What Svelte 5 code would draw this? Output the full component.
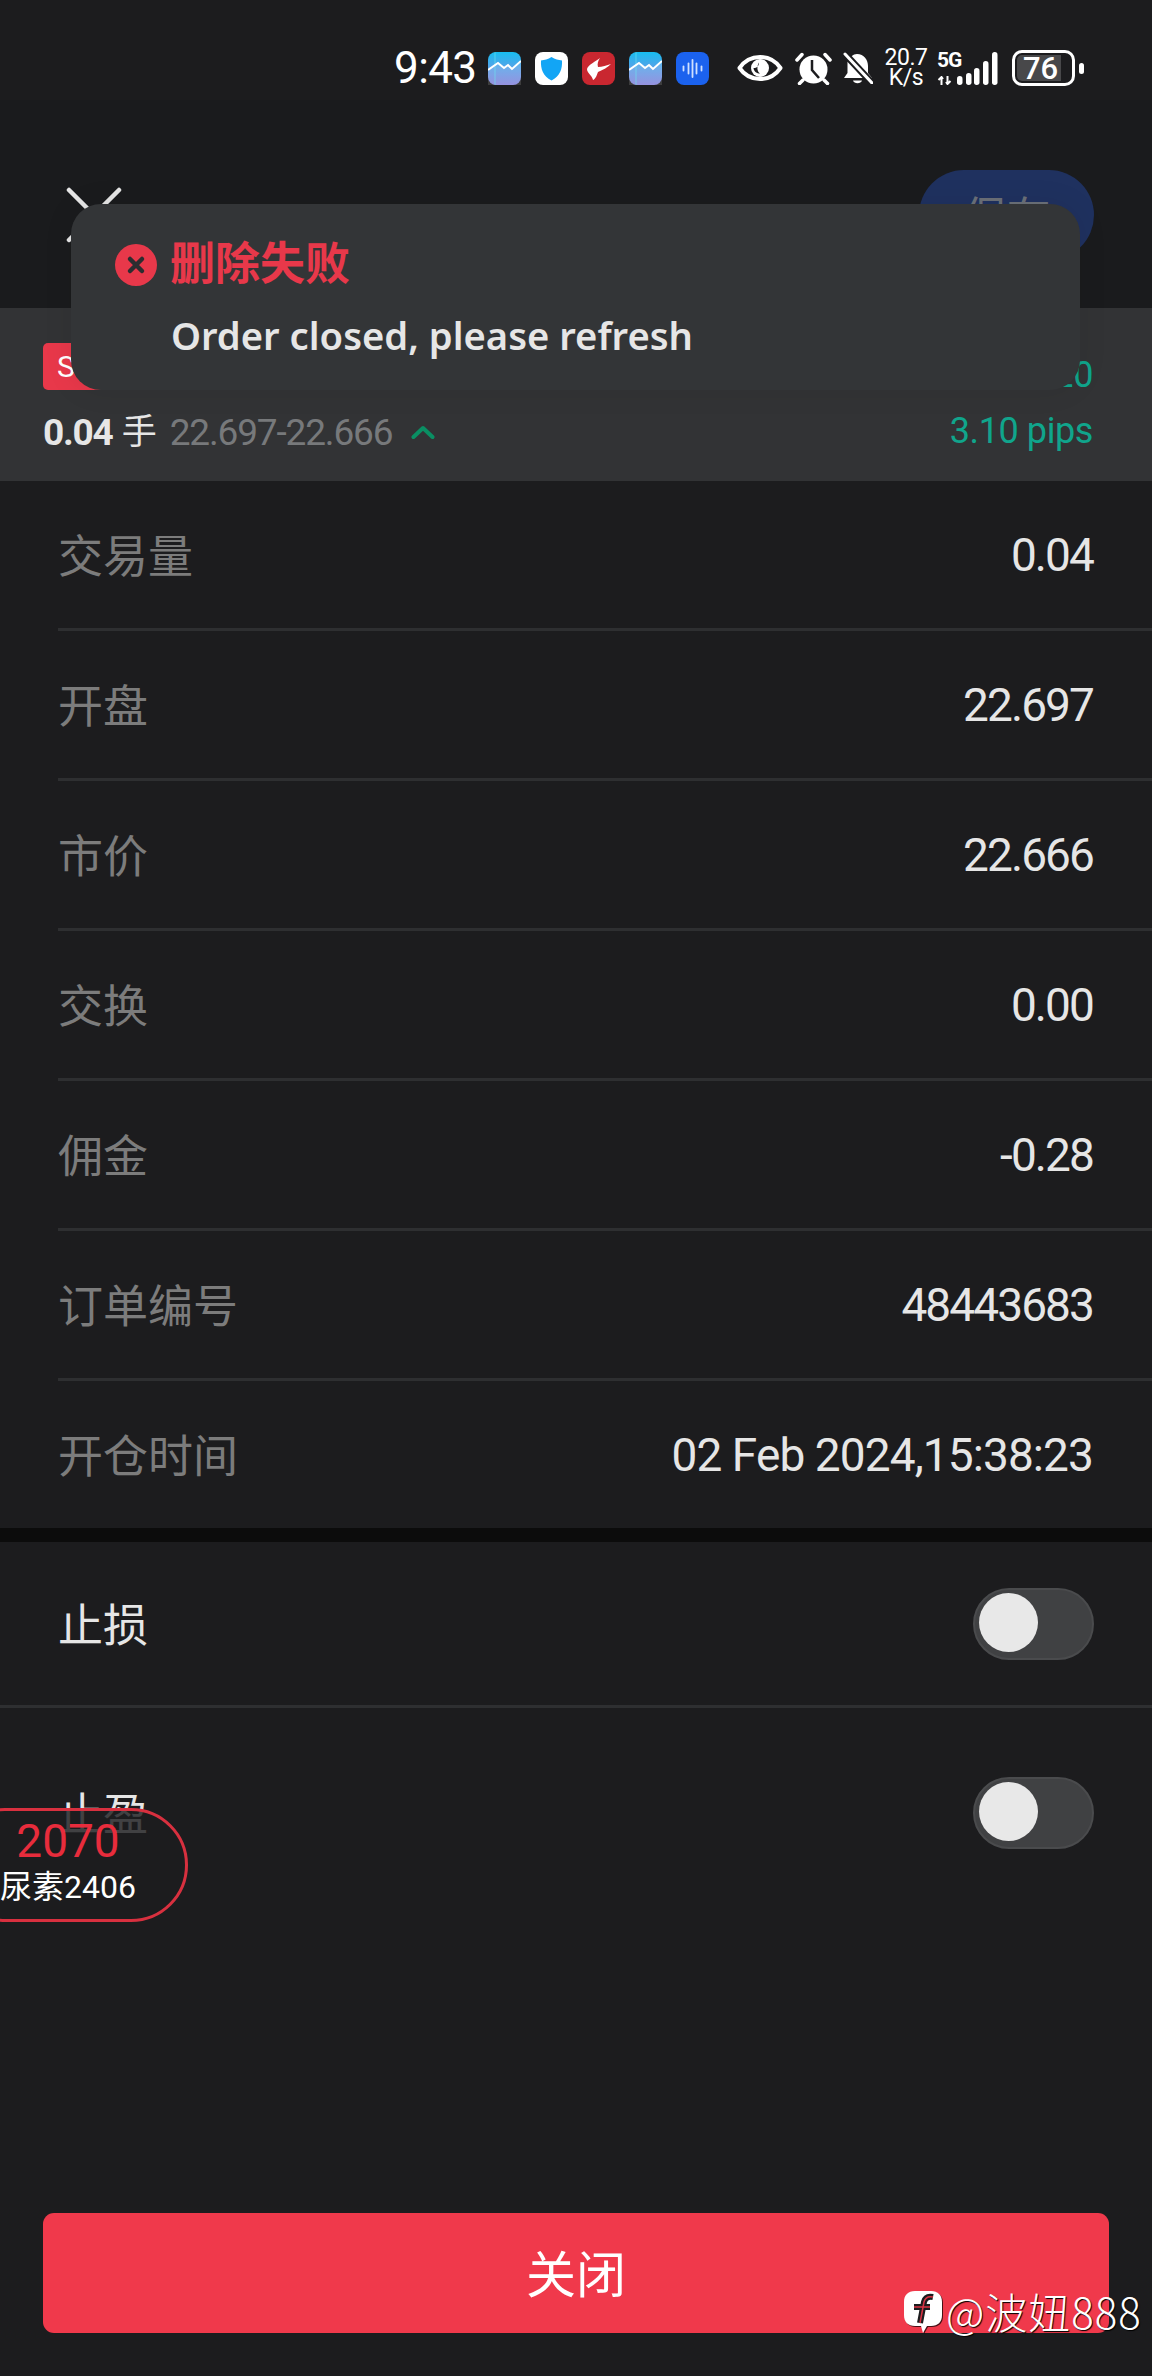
<script lang="ts">
	const details = [
		{ label: '交易量', value: '0.04' },
		{ label: '开盘', value: '22.697' },
		{ label: '市价', value: '22.666' },
		{ label: '交换', value: '0.00' },
		{ label: '佣金', value: '-0.28' },
		{ label: '订单编号', value: '48443683' },
		{ label: '开仓时间', value: '02 Feb 2024,15:38:23', date: true }
	];

	const signalBars = [
		{ x: 0, h: 9 },
		{ x: 9, h: 12 },
		{ x: 17, h: 17 },
		{ x: 26, h: 24 },
		{ x: 35, h: 33 }
	];
</script>

{#snippet stockIcon()}
	<svg class="app-icon" viewBox="0 0 33 33">
		<defs>
			<linearGradient id="stock" x1="0" y1="0" x2="0" y2="1">
				<stop offset="0" stop-color="#17bdf0" />
				<stop offset="0.55" stop-color="#5f9de6" />
				<stop offset="1" stop-color="#8480da" />
			</linearGradient>
		</defs>
		<rect width="33" height="33" rx="8" fill="url(#stock)" />
		<path d="M0 18 L10 11 L16 16 L20 13 L24 17 L33 9 V33 H0 Z" fill="#fff" opacity="0.14" />
		<path d="M7 0 V33" stroke="#6fe8f0" stroke-width="1" opacity="0.6" />
		<path d="M0 18 L10 11 L16 16 L20 13 L24 17 L33 9" fill="none" stroke="#fff" stroke-width="2" />
	</svg>
{/snippet}

{#snippet toggle()}
	<div class="toggle"><span class="knob"></span></div>
{/snippet}

<div class="page">
	<div class="status-bar">
		<span class="time">9:43</span>
		<div class="app-icons">
			{@render stockIcon()}
			<svg class="app-icon" viewBox="0 0 33 33">
				<rect width="33" height="33" rx="8" fill="#fff" />
				<path d="M16.5 5 C20 7.5 23.500 8 27 8.500 C27.500 17 25 24 16.500 28.500 C8 24 5.500 17 6 8.500 C9.500 8 13 7.500 16.500 5 Z" fill="#12a5f5" />
			</svg>
			<svg class="app-icon" viewBox="0 0 33 33">
				<rect width="33" height="33" rx="8" fill="#c92730" />
				<path d="M18 6 C14 9 6 13 5 17 C5 21 10 23 11 28 C14 27 15 22 16 20 C21 18 26 15 29 12 C25 13 20 15 16 15 C15 12 16 9 18 6 Z" fill="#fff" />
			</svg>
			{@render stockIcon()}
			<svg class="app-icon" viewBox="0 0 33 33">
				<rect width="33" height="33" rx="8" fill="#1b62ee" />
				<g stroke="#cfe0ff" stroke-width="1.800" stroke-linecap="round">
					<path d="M7.500 14.500 V18.500" />
					<path d="M12.500 11.500 V21.500" />
					<path d="M16.500 8 V25" />
					<path d="M20.500 11.500 V21.500" />
					<path d="M25.500 14.500 V18.500" />
				</g>
			</svg>
		</div>
		<div class="sys-icons">
			<svg class="eye" viewBox="0 0 46 26">
				<path d="M2.500 13 C8 5 15 2 23 2 C31 2 38 5 43.500 13 C38 21 31 24 23 24 C15 24 8 21 2.500 13 Z" fill="none" stroke="#fff" stroke-width="4" stroke-linejoin="round" />
				<circle cx="23" cy="13" r="9" fill="#fff" />
				<path d="M22 7.500 C22 11 20 13 16.500 13 C17 17 20 18.500 23 18.500 C19.500 16 20 10.500 22 7.500 Z" fill="#1c1c1e" />
			</svg>
			<svg class="alarm" viewBox="0 0 37 33">
				<circle cx="18.500" cy="17.500" r="14" fill="#fff" />
				<path d="M17 8 V18 L24 26" fill="none" stroke="#1c1c1e" stroke-width="2.500" />
				<path d="M2 8 L7 2.500 M35 8 L30 2.500 M8 28 L4.500 31.500 M29 28 L32.500 31.500" stroke="#fff" stroke-width="3.500" stroke-linecap="round" />
			</svg>
			<svg class="bell" viewBox="0 0 30 32">
				<path d="M14 2 C21 2 25 8 25 14 V21 L29 26 H1 L4.500 21 V10 C7 5 10 2 14 2 Z" fill="#fff" />
				<path d="M10 28.500 H19 C18 32 11 32 10 28.500 Z" fill="#fff" />
				<path d="M2 2 L29 31" stroke="#1c1c1e" stroke-width="7" />
				<path d="M2 2 L29 31" stroke="#fff" stroke-width="3" stroke-linecap="round" />
			</svg>
			<div class="speed"><span>20.7</span><span>K/s</span></div>
			<div class="network">
				<div class="net-type">
					<span>5G</span>
					<svg width="16" height="9" viewBox="0 0 16 9">
						<path d="M4.500 9 V1 M1.500 4 L4.500 1 L6 3 M10.500 0 V8 M13.500 5 L10.500 8 L9 6" fill="none" stroke="#fff" stroke-width="2" />
					</svg>
				</div>
				<svg class="signal" viewBox="0 0 41 33">
					{#each signalBars as bar}
						<rect x={bar.x} y={33 - bar.h} width="5.500" height={bar.h} rx="2.700" fill="#fff" />
					{/each}
				</svg>
			</div>
			<div class="battery">
				<div class="battery-body">
					<span class="battery-fill"></span>
					<span class="battery-level">76</span>
				</div>
				<span class="battery-nub"></span>
			</div>
		</div>
	</div>

	<header class="top-bar">
		<svg class="close" viewBox="0 0 56 56">
			<path d="M3 3 L53 53 M53 3 L3 53" stroke="#e6e6e6" stroke-width="4.500" stroke-linecap="round" />
		</svg>
		<button class="save">保存</button>
	</header>

	<section class="summary">
		<div class="summary-row">
			<span class="side-badge">SELL</span>
			<span class="profit">1.20</span>
		</div>
		<div class="summary-row second">
			<div class="lots">
				<strong>0.04</strong>
				<span class="lots-unit">手</span>
				<span class="range">22.697-22.666</span>
				<svg class="chevron" viewBox="0 0 24 14">
					<path d="M2.500 12 L12 3 L21.500 12" fill="none" stroke="#0a8f63" stroke-width="4" stroke-linecap="round" stroke-linejoin="round" />
				</svg>
			</div>
			<span class="pips">3.10 pips</span>
		</div>
	</section>

	<section class="details">
		{#each details as row}
			<div class="detail-row">
				<span class="label">{row.label}</span>
				<span class="value" class:date={row.date}>{row.value}</span>
			</div>
		{/each}
	</section>

	<div class="section-gap"></div>

	<section class="stops">
		<div class="stop-row first">
			<span>止损</span>
			{@render toggle()}
		</div>
		<div class="stop-row second">
			<span>止盈</span>
			{@render toggle()}
		</div>
	</section>

	<footer class="footer">
		<button class="close-order">关闭</button>
	</footer>

	<div class="toast">
		<div class="toast-title">
			<svg class="toast-icon" viewBox="0 0 42 42">
				<circle cx="21" cy="21" r="21" fill="#e8384a" />
				<path d="M15 15 L27 27 M27 15 L15 27" stroke="#2c2d30" stroke-width="4.500" stroke-linecap="round" />
			</svg>
			<span>删除失败</span>
		</div>
		<p>Order closed, please refresh</p>
	</div>

	<div class="ticker">
		<span class="ticker-price">2070</span>
		<span class="ticker-name">尿素2406</span>
	</div>

	<div class="watermark">
		<svg class="watermark-logo" viewBox="0 0 40 44">
			<path d="M12 1 H28 C35 1 39 5 39 12 V25 C39 32 35 36 28 36 H24 L20 43 L18 36 H12 C5 36 1 32 1 25 V12 C1 5 5 1 12 1 Z" fill="#000" opacity="0.7" transform="translate(1 1)" />
			<path d="M12 1 H28 C35 1 39 5 39 12 V25 C39 32 35 36 28 36 H24 L20 43 L18 36 H12 C5 36 1 32 1 25 V12 C1 5 5 1 12 1 Z" fill="#fff" />
			<path d="M30 7 C25 6 22 8 21 12 L17 33 M11 17 H27" fill="none" stroke="#1c1c1e" stroke-width="6" />
			<path d="M30 7 C25 6 22 8 21 12 L17 33 M11 17 H27" fill="none" stroke="#d83243" stroke-width="1.500" />
		</svg>
		<span>@波妞888</span>
	</div>
</div>

<style>
	:global(body) {
		margin: 0;
		background: #1c1c1e;
	}

	.page {
		position: relative;
		display: flex;
		flex-direction: column;
		width: 1152px;
		height: 2376px;
		overflow: hidden;
		background: #1c1c1e;
		color: #e6e6e6;
		font-family: Roboto, 'Noto Sans CJK SC', sans-serif;
	}

	/* status bar */
	.status-bar {
		display: flex;
		align-items: center;
		box-sizing: border-box;
		height: 100px;
		padding: 36px 0 0 394px;
		color: #fff;
	}

	.time {
		width: 94px;
		font-size: 44px;
		line-height: 1;
		letter-spacing: -0.6px;
	}

	.app-icons {
		display: flex;
		gap: 14px;
	}

	.app-icon {
		width: 33px;
		height: 33px;
	}

	.sys-icons {
		display: flex;
		align-items: center;
		margin-left: 28px;
	}

	.eye {
		width: 46px;
		height: 26px;
	}

	.alarm {
		width: 37px;
		height: 33px;
		margin-left: 12px;
	}

	.bell {
		width: 30px;
		height: 32px;
		margin-left: 11px;
	}

	.speed {
		display: flex;
		flex-direction: column;
		align-items: center;
		width: 42px;
		margin-left: 12px;
		font-size: 23px;
		line-height: 20px;
		letter-spacing: -0.4px;
	}

	.network {
		display: flex;
		align-items: flex-end;
		margin-left: 10px;
	}

	.net-type {
		display: flex;
		flex-direction: column;
		align-items: flex-start;
		gap: 7px;
		width: 20px;
		font-size: 21px;
		font-weight: 700;
		line-height: 17px;
		letter-spacing: -1px;
	}

	.signal {
		width: 41px;
		height: 33px;
	}

	.battery {
		display: flex;
		align-items: center;
		gap: 4px;
		margin-left: 14px;
	}

	.battery-body {
		position: relative;
		display: flex;
		align-items: center;
		justify-content: center;
		box-sizing: border-box;
		width: 63px;
		height: 36px;
		padding-right: 6px;
		border: 3px solid #fff;
		border-radius: 10px;
	}

	.battery-fill {
		position: absolute;
		top: 2px;
		bottom: 2px;
		left: 2px;
		width: 44px;
		border-radius: 5px 0 0 5px;
		background: #48484a;
	}

	.battery-level {
		position: relative;
		font-size: 31px;
		font-weight: 500;
		line-height: 1;
	}

	.battery-nub {
		width: 5px;
		height: 11px;
		border-radius: 3px;
		background: #fff;
	}

	/* header */
	.top-bar {
		display: flex;
		align-items: center;
		justify-content: space-between;
		box-sizing: border-box;
		height: 208px;
		padding: 22px 58px 0 66px;
		background: #1a1b1d;
	}

	.close {
		width: 56px;
		height: 56px;
	}

	.save {
		width: 175px;
		height: 90px;
		padding: 0;
		border: 0;
		border-radius: 45px;
		background: #1f315f;
		color: #6b7078;
		font: inherit;
		font-size: 44px;
	}

	/* summary */
	.summary {
		display: flex;
		flex-direction: column;
		gap: 21px;
		box-sizing: border-box;
		height: 173px;
		padding: 35px 59px 0 43px;
		background: #323335;
	}

	.summary-row {
		display: flex;
		align-items: flex-end;
		justify-content: space-between;
		height: 47px;
	}

	.summary-row.second {
		align-items: center;
		height: 42px;
	}

	.side-badge {
		display: flex;
		align-items: center;
		box-sizing: border-box;
		height: 47px;
		padding: 0 14px;
		border-radius: 5px;
		background: #e8384a;
		color: #fff;
		font-size: 30px;
	}

	.profit,
	.pips {
		color: #10a58c;
		font-size: 36px;
		letter-spacing: -0.4px;
		line-height: 1;
	}

	.profit {
		margin-bottom: -3px;
	}

	.pips {
		margin-bottom: 2px;
	}

	.lots {
		display: flex;
		align-items: center;
		font-size: 37px;
		line-height: 1;
	}

	.lots strong {
		font-weight: 700;
		letter-spacing: -1.2px;
	}

	.lots-unit {
		margin-left: 9px;
		font-size: 35px;
	}

	.range {
		margin-left: 13px;
		color: #77797b;
		letter-spacing: -1.15px;
	}

	.chevron {
		width: 24px;
		height: 14px;
		margin-left: 19px;
	}

	/* detail rows */
	.detail-row {
		display: flex;
		align-items: center;
		justify-content: space-between;
		box-sizing: border-box;
		height: 150px;
		margin-left: 58px;
		padding-right: 59px;
		border-bottom: 3px solid #2e2f31;
	}

	.detail-row:last-child {
		height: 147px;
		border-bottom: 0;
	}

	.label {
		margin-bottom: 3px;
		color: #7c7c7c;
		font-size: 45px;
	}

	.value {
		color: #e6e6e6;
		font-size: 46px;
		letter-spacing: -1.9px;
	}

	.value.date {
		letter-spacing: -0.9px;
	}

	.section-gap {
		height: 14px;
		background: #0c0c0c;
	}

	/* stop loss / take profit */
	.stop-row {
		display: flex;
		align-items: center;
		justify-content: space-between;
		box-sizing: border-box;
		padding: 0 58px;
		font-size: 45px;
	}

	.stop-row span:first-child {
		margin-bottom: 3px;
	}

	.stop-row.first {
		height: 166px;
		border-bottom: 3px solid #2e2f31;
	}

	.stop-row.second {
		height: 210px;
	}

	.toggle {
		display: flex;
		align-items: center;
		box-sizing: border-box;
		width: 121px;
		height: 72px;
		padding-left: 4px;
		border: 2px solid #4a4b4d;
		border-radius: 36px;
		background: #404143;
	}

	.knob {
		width: 59px;
		height: 59px;
		border-radius: 50%;
		background: #e8e8e8;
	}

	/* bottom button */
	.footer {
		margin-top: auto;
		padding: 0 43px 43px;
	}

	.close-order {
		display: block;
		width: 100%;
		height: 120px;
		padding: 0 0 4px;
		border: 0;
		border-radius: 11px;
		background: #f0394b;
		color: #fff;
		font: inherit;
		font-size: 50px;
	}

	/* overlays */
	.toast {
		position: absolute;
		top: 204px;
		left: 71px;
		box-sizing: border-box;
		width: 1009px;
		height: 186px;
		padding: 37px 0 0 44px;
		border-radius: 30px;
		background: #333537;
		box-shadow: 0 0 30px rgba(0, 0, 0, 0.08);
	}

	.toast-title {
		display: flex;
		align-items: center;
		gap: 13px;
		color: #e8384a;
		font-size: 45px;
		font-weight: 700;
		line-height: 48px;
	}

	.toast-icon {
		width: 42px;
		height: 42px;
	}

	.toast p {
		margin: 23px 0 0 56px;
		color: #e6e6e6;
		font-family: 'Noto Sans', sans-serif;
		font-size: 38.2px;
		font-weight: 600;
		line-height: 46px;
	}

	.ticker {
		position: absolute;
		top: 1808px;
		left: -52px;
		display: flex;
		flex-direction: column;
		align-items: center;
		box-sizing: border-box;
		width: 240px;
		height: 114px;
		padding-top: 5px;
		border: 3px solid #d8303f;
		border-radius: 57px;
		background: rgba(28, 28, 30, 0.82);
	}

	.ticker-price {
		color: #e82c3c;
		font-size: 46px;
		line-height: 50px;
	}

	.ticker-name {
		margin-top: 2px;
		color: #fff;
		font-size: 32px;
		line-height: 38px;
	}

	.watermark {
		position: absolute;
		top: 2290px;
		left: 903px;
		display: flex;
		align-items: flex-start;
		gap: 3px;
		color: #fff;
		font-size: 42px;
		font-family: 'Noto Sans CJK SC', sans-serif;
		font-weight: 300;
		line-height: 42px;
		letter-spacing: 1px;
		text-shadow: 1px 1px 1px #000;
	}

	.watermark-logo {
		width: 40px;
		height: 44px;
	}
</style>
